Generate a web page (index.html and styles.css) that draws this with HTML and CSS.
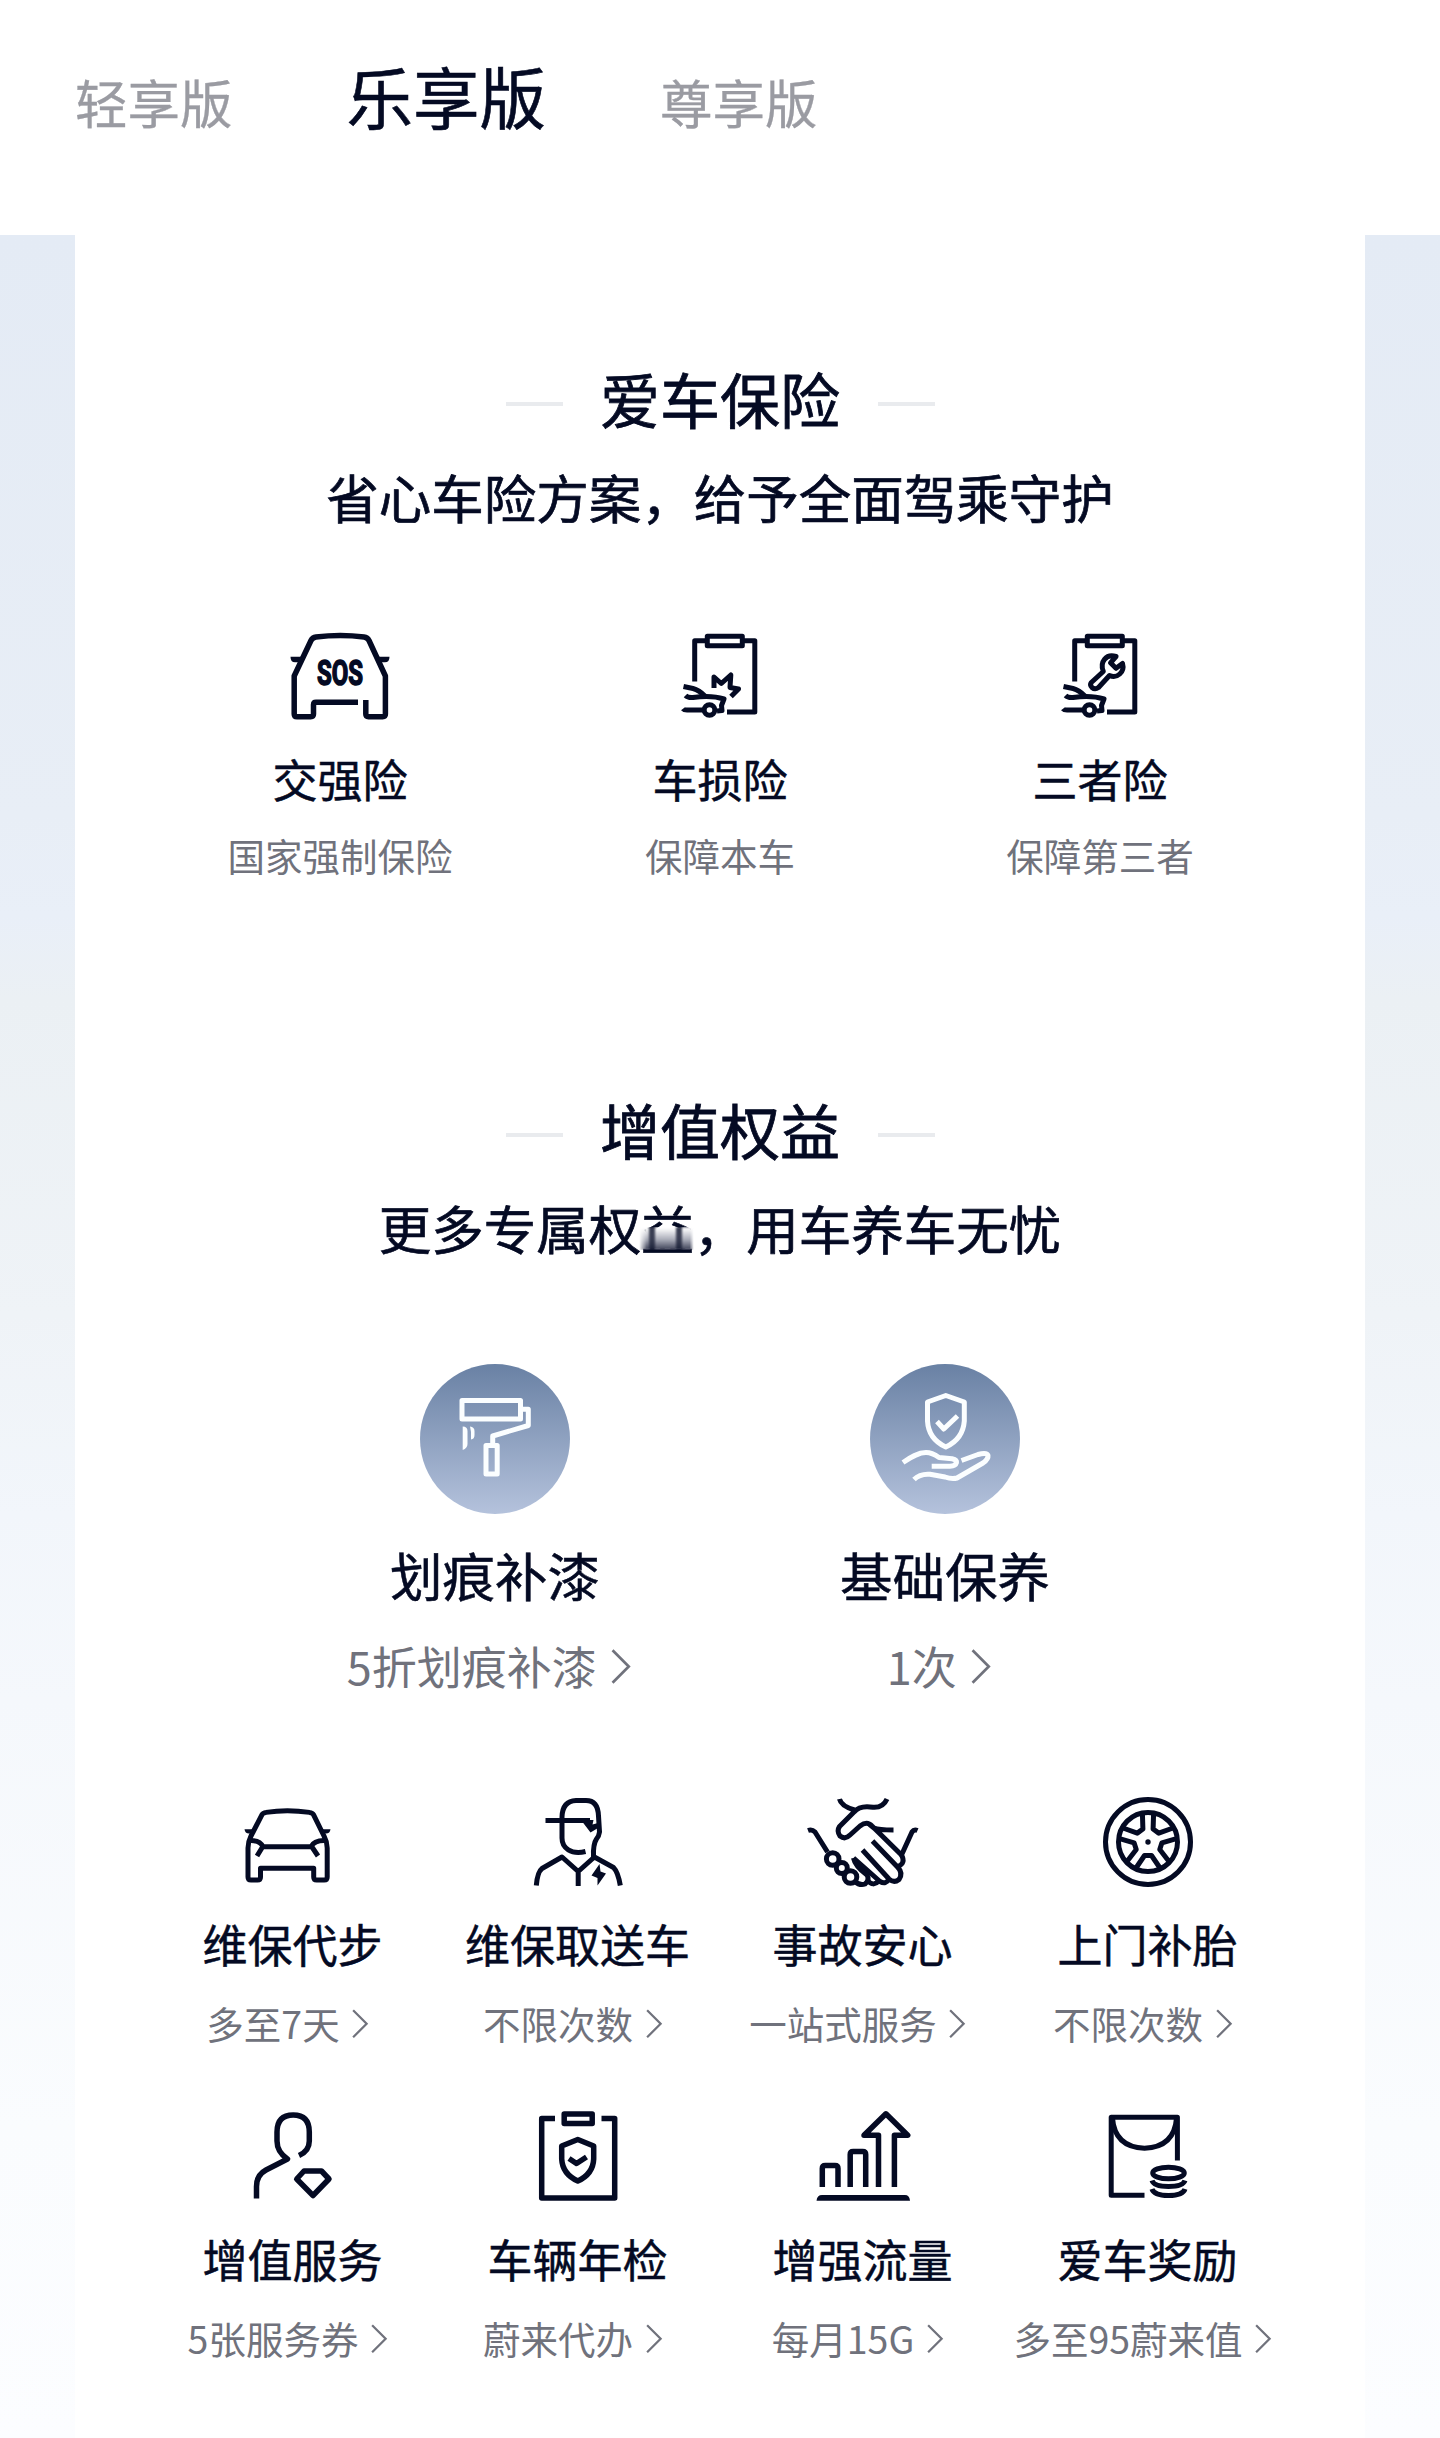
FILE: index.html
```html
<!DOCTYPE html>
<html lang="zh-CN">
	<head>
		<meta charset="UTF-8" />
		<meta name="viewport" content="width=device-width, initial-scale=1.0" />
		<title>乐享版</title>
		<link rel="stylesheet" href="styles.css">
	</head>
	<body>
		<!-- 多处复用的图形 -->
		<svg class="defs" width="0" height="0">
			<symbol id="arrow" viewBox="0 0 30 30">
				<path d="M9.7 4.2L20.5 15 9.7 25.8" />
			</symbol>
			<symbol id="crash-car" viewBox="0 0 120 120">
				<path d="M34.7 65.5V24.7H47M82 24.7h12.8V96H67" />
				<rect x="47.3" y="20.3" width="35" height="9.4" />
				<path d="M23.5 70.5L33 72.5Q39 74 45.5 80.5" />
				<path d="M25.5 79.5Q28 82 33 81.5C45 80 56 80.500 64 83L61.500 89.500 62 94.500 57 95" />
				<circle cx="49.5" cy="94" r="5.300" />
				<path d="M23 92.700Q24 94 27 94H44" />
			</symbol>
		</svg>
		<header class="tabs">
			<a class="tab">轻享版</a>
			<a class="tab active">乐享版</a>
			<a class="tab">尊享版</a>
		</header>
		<div class="page">
			<main class="card">
				<section class="insurance">
					<h2 class="title">爱车保险</h2>
					<p class="subtitle">省心车险方案，给予全面驾乘守护</p>
					<div class="row three">
						<div class="item">
							<svg class="icon" viewBox="0 0 120 120">
								<path d="M78 86.3H36q-2.500 0-2.500 2.500V98q0 2.700-2.700 2.700H17q-2.800 0-2.800-2.800V60L31 24.500q1.500-3 5-3.500 24.500-3 48 0 3.500.5 5 3.500L105.400 60V98q0 2.700-2.700 2.700H88.500q-2.700 0-2.700-2.700V84" />
								<path class="fill" d="M10.500 40.700H23l-3 5.500h-5q-4.500 0-4.500-5.500zM109.500 40.700H97l3 5.500h5q4.500 0 4.500-5.500z" />
								<text class="sos" x="60" y="68.500" textLength="46" lengthAdjust="spacingAndGlyphs">SOS</text>
							</svg>
							<h3 class="name">交强险</h3>
							<p class="desc">国家强制保险</p>
						</div>
						<div class="item">
							<svg class="icon thin" viewBox="0 0 120 120">
								<use href="#crash-car" />
								<path d="M54 72V61L61.300 67.500 70.800 59 70 71.500 78.500 73 71 80.500" />
							</svg>
							<h3 class="name">车损险</h3>
							<p class="desc">保障本车</p>
						</div>
						<div class="item">
							<svg class="icon thin" viewBox="0 0 120 120">
								<use href="#crash-car" />
								<path d="M51.300 66.500L63.300 55.500C59.500 46 66 37.500 76 40.500L70.500 46.800 76 52.300 82.500 47.500C85 56 77 63 69.500 59.500L58.500 71.500Q55 74 52 71.500 49.500 69 51.300 66.500z" />
							</svg>
							<h3 class="name">三者险</h3>
							<p class="desc">保障第三者</p>
						</div>
					</div>
				</section>
				<section class="benefit">
					<h2 class="title">增值权益</h2>
					<p class="subtitle">更多专属权<span class="loading">益</span>，用车养车无忧</p>
					<div class="row two">
						<div class="item">
							<svg class="round" viewBox="0 0 150 150">
								<rect x="42" y="36.500" width="58.500" height="18.500" />
								<path d="M101 45.300h7.300V61.500L72.700 72V81" />
								<rect x="66" y="81.500" width="11.200" height="28.600" />
								<path class="fill" d="M42.700 62.500Q47.500 62.500 47.500 67V80Q47.500 84 42.700 86zM50 62.500Q54.500 63 54.500 67V71Q54.500 75 51 75.500V68z" />
							</svg>
							<h3 class="name">划痕补漆</h3>
							<p class="desc">5折划痕补漆<svg class="arrow"><use href="#arrow" /></svg></p>
						</div>
						<div class="item">
							<svg class="round" viewBox="0 0 150 150">
								<path d="M75.800 31.500L94.300 38V57Q93 75 75.800 83 58.500 75 57.500 57V38z" />
								<path d="M67 57.500L73.800 65 87.500 52" />
								<path d="M33 98.500C41 93 48 88.500 56 88.500Q62 88.500 69 93.500L82 94.800Q87 96 86.500 98.500 85.500 102 80 102.300H61.700" />
								<path d="M91.500 96.500L108 90.500Q117 88 118 91.500 118.500 95 113 99L87 114Q82 115.500 75 113L60 110.300Q50 109.500 44 115.500" />
							</svg>
							<h3 class="name">基础保养</h3>
							<p class="desc">1次<svg class="arrow"><use href="#arrow" /></svg></p>
						</div>
					</div>
					<div class="row four">
						<div class="item">
							<svg class="icon thin" viewBox="0 0 120 120">
								<path d="M15 66V95q0 3 3 3h6.500q3 0 3-3V86.300H80.700V95q0 3 3 3h7.500q3 0 3-3V66Q94.200 60 91 54L80.500 32.700q-1-2-4-2.300Q54 27 33 30.400q-3 .3-4 2.300L18 54Q15 60 15 66z" />
								<path d="M18 58.500Q27 58.500 30 64.700H78Q81 58.500 91 58.500M29.500 65L24 74M79 65L85 74" />
								<path class="fill" d="M11.500 47.300H21.500L19.500 51.500H16Q12 51.500 11.500 47.300zM97.500 47.300H87.500L89.500 51.500H93Q97 51.500 97.500 47.300z" />
							</svg>
							<h3 class="name">维保代步</h3>
							<p class="desc">多至7天<svg class="arrow"><use href="#arrow" /></svg></p>
						</div>
						<div class="item">
							<svg class="icon thin" viewBox="0 0 120 120">
								<path d="M67.500 69.500C53 73 44 66 44 56V35Q44.500 19 58 18.500H68Q80 18.500 80.500 34L81.500 50Q81 54 78.500 57 75 62 75.500 75" />
								<path d="M27.500 38.500H72" />
								<path class="fill" d="M63 38H75.500L74.500 42.500 80 41V46L72.500 50.500z" />
								<path d="M18.300 103.500Q19.500 90 24 86.500L44 75 60.200 89.500 76.400 75 95.500 85.500Q100 90 102.300 103.500M60.200 89V104" />
								<path class="fill" d="M81.500 82L73.500 93.500 79.500 96 79.500 103.500 88 91.500 82.500 89.500z" />
							</svg>
							<h3 class="name">维保取送车</h3>
							<p class="desc">不限次数<svg class="arrow"><use href="#arrow" /></svg></p>
						</div>
						<div class="item">
							<svg class="icon thin" viewBox="0 0 120 120">
								<path d="M36.500 17Q38 24 51.500 28M84 17Q80 26 70 25.300 57 23 51 30L36.500 44.500Q33.500 49 37 54 42 58 47 53L57 44Q64 38.500 69 44L98.500 73M66 42L71 46Q75 48 90.500 48" />
								<path d="M5 48.500Q9 47 12 50L24.500 70M114.500 48.500Q111 47 109 50L98.500 73Q103 81 95 84.500" />
								<path d="M69.500 59L94.500 85Q100.500 91 96 97.500 91 101.500 86 97L59.500 68M86 97Q83 103 77 99.500L50.500 76M76 99Q70 105 64.500 98.500" />
								<path d="M50.500 76Q52 84 64 93Q67 98 62 102 57 104 51 99" />
								<circle cx="29.700" cy="77" r="6.300" />
								<circle cx="38.800" cy="86" r="5.500" />
								<circle cx="47.500" cy="95" r="6.300" />
							</svg>
							<h3 class="name">事故安心</h3>
							<p class="desc">一站式服务<svg class="arrow"><use href="#arrow" /></svg></p>
						</div>
						<div class="item">
							<svg class="icon thin" viewBox="-60 -60 120 120">
								<circle r="42.500" />
								<circle r="29.500" />
								<path id="spoke" d="M-12 26L-3.500 13.500H3.500L12 26" />
								<use href="#spoke" transform="rotate(72)" />
								<use href="#spoke" transform="rotate(144)" />
								<use href="#spoke" transform="rotate(216)" />
								<use href="#spoke" transform="rotate(288)" />
								<circle class="fill" r="2.700" />
							</svg>
							<h3 class="name">上门补胎</h3>
							<p class="desc">不限次数<svg class="arrow"><use href="#arrow" /></svg></p>
						</div>
						<div class="item">
							<svg class="icon" viewBox="0 0 120 120">
								<path d="M66 58.500Q76.300 54 76.300 44V35Q76.300 18 60.200 18T44 35V44Q44 55 54.500 62L33 73Q23.500 78 23.500 89.500V101.500" />
								<path d="M71 74H88.500L96 82 80 98.500 63.700 82z" />
							</svg>
							<h3 class="name">增值服务</h3>
							<p class="desc">5张服务券<svg class="arrow"><use href="#arrow" /></svg></p>
						</div>
						<div class="item">
							<svg class="icon" viewBox="0 0 120 120">
								<path d="M37 21.500H23.700V101H96.700V21.500H83.500" />
								<rect x="46.200" y="17" width="28" height="9.500" />
								<path d="M59.800 42.500L75.700 49V62Q75 77 59.800 84 44.500 77 43.700 62V49z" />
								<path d="M51 61.500L58.500 66.500 68.500 60" />
							</svg>
							<h3 class="name">车辆年检</h3>
							<p class="desc">蔚来代办<svg class="arrow"><use href="#arrow" /></svg></p>
						</div>
						<div class="item">
							<svg class="icon" viewBox="0 0 120 120">
								<path d="M19.300 90V71.500q0-3 3-3H32q3 0 3 3V90M47.200 90V57.500q0-3 3-3h9.500q3 0 3 3V90M75.500 90V38.300H61L82.900 16.800 104.700 38.300H91.400V90" />
								<path class="fill" d="M13.500 103.700Q14 98 19 98H102Q106.500 98 107 103.700z" />
							</svg>
							<h3 class="name">增强流量</h3>
							<p class="desc">每月15G<svg class="arrow"><use href="#arrow" /></svg></p>
						</div>
						<div class="item">
							<svg class="icon thin" viewBox="0 0 120 120">
								<path d="M56.500 98.300H23.200V20.300H89.400V63.500" />
								<path d="M24.500 21Q26.500 50 56.500 51.300 86.500 50 88.500 21" />
								<ellipse cx="80.500" cy="76" rx="15.800" ry="5.800" />
								<path d="M64 83.500Q66 89.500 80.500 89.500T97 83.500M64 92Q66 98.500 80.500 98.500T97 92" />
							</svg>
							<h3 class="name">爱车奖励</h3>
							<p class="desc">多至95蔚来值<svg class="arrow"><use href="#arrow" /></svg></p>
						</div>
					</div>
				</section>
			</main>
		</div>
	</body>
</html>
```
FILE: styles.css
```css
:root {
	box-sizing: border-box;
}
*,
::before,
::after {
	box-sizing: inherit;
}
body {
	margin: 0;
	background-color: #fff;
	color: #040a23;
	font-family: "Noto Sans CJK SC", "Noto Sans", sans-serif;
}
h2,
h3,
p {
	margin: 0;
	font-weight: 400;
	white-space: nowrap;
}
svg {
	display: block;
	fill: none;
	stroke: currentColor;
	stroke-linejoin: round;
}
.defs {
	position: absolute;
}

/* 顶部版本切换 */
.tabs {
	display: flex;
	align-items: baseline;
	gap: 114px;
	height: 235px;
	padding: 45px 75px 0;
}
.tab {
	color: #9a9ba2;
	font-size: 52.5px;
	line-height: 100px;
	-webkit-text-stroke: 0.3px;
}
.tab.active {
	color: #040a23;
	font-size: 66.5px;
	-webkit-text-stroke: 0.6px;
}

.page {
	height: 2203px;
	padding: 0 75px;
	background: linear-gradient(
		#e4ebf5 0,
		#e8eef6 580px,
		#e9eff8 680px,
		#ebf0f4 765px,
		#eff3f7 1080px,
		#f2f6fb 1280px,
		#f5f8fc 1465px,
		#fafcfe 1893px,
		#fcfdff 100%
	);
}
.card {
	height: 100%;
	padding-top: 118px;
	background-color: #fff;
}
.insurance {
	height: 731px;
}

.title {
	display: flex;
	align-items: center;
	justify-content: center;
	gap: 37.5px;
	height: 90px;
	font-size: 60px;
	line-height: 90px;
	-webkit-text-stroke: 0.8px;
}
.title::before,
.title::after {
	content: "";
	width: 57px;
	height: 4px;
	margin-top: 12px;
	background-color: #e9ebee;
}
.subtitle {
	height: 80px;
	margin-top: 13px;
	font-size: 52.5px;
	line-height: 80px;
	text-align: center;
	-webkit-text-stroke: 0.7px;
}
/* 未加载完的渐变遮罩 */
.loading {
	position: relative;
}
.loading::after {
	content: "";
	position: absolute;
	left: -2px;
	right: 0;
	bottom: 15px;
	height: 23px;
	background:
		linear-gradient(rgba(4, 10, 35, 0.8), rgba(4, 10, 35, 0.6)) 10px 0 / 6px 100% no-repeat,
		linear-gradient(rgba(4, 10, 35, 0.8), rgba(4, 10, 35, 0.6)) 37px 0 / 6px 100% no-repeat,
		linear-gradient(#fff 5%, #a9acb8 55%, #3a3e54);
	mask-image: linear-gradient(90deg, transparent, #000 14%, #000 92%, transparent);
	filter: blur(0.8px);
}

.row {
	display: grid;
	justify-content: center;
}
.item {
	display: flex;
	flex-direction: column;
	align-items: center;
}
.icon {
	width: 120px;
	height: 120px;
	stroke-width: 5.5;
}
.icon.thin {
	stroke-width: 5;
}
.fill {
	fill: currentColor;
	stroke: none;
}
.sos {
	fill: currentColor;
	stroke: currentColor;
	stroke-width: 1.6;
	font-family: Roboto, sans-serif;
	font-size: 35px;
	font-weight: 700;
	text-anchor: middle;
}
.name {
	height: 60px;
	font-size: 45px;
	line-height: 60px;
	-webkit-text-stroke: 0.5px;
}
.desc {
	display: flex;
	align-items: center;
	height: 50px;
	color: #70727c;
	font-size: 37.5px;
	line-height: 50px;
}
.arrow {
	width: 1em;
	height: 1em;
	margin: 1px 0 0 1.5px;
	stroke-width: 1.8;
	stroke-linejoin: miter;
}

.three {
	grid-template-columns: repeat(3, 380px);
	margin-top: 80px;
}
.three .name {
	margin-top: 13px;
}
.three .desc {
	margin-top: 21px;
}

.two {
	grid-template-columns: repeat(2, 450px);
	margin-top: 97px;
}
.round {
	width: 150px;
	height: 150px;
	border-radius: 50%;
	background: linear-gradient(#6981a4, #b4c2dc);
	color: #fbfeff;
	stroke-width: 5;
}
.two .name {
	height: 70px;
	margin-top: 25px;
	font-size: 52.5px;
	line-height: 70px;
}
.two .desc {
	height: 60px;
	margin-top: 27px;
	font-size: 45px;
	line-height: 60px;
}

.four {
	grid-template-columns: repeat(4, 285px);
	grid-auto-rows: 315px;
	margin-top: 86px;
}
.four .name {
	margin-top: 12px;
}
.four .desc {
	margin-top: 24px;
}
```
